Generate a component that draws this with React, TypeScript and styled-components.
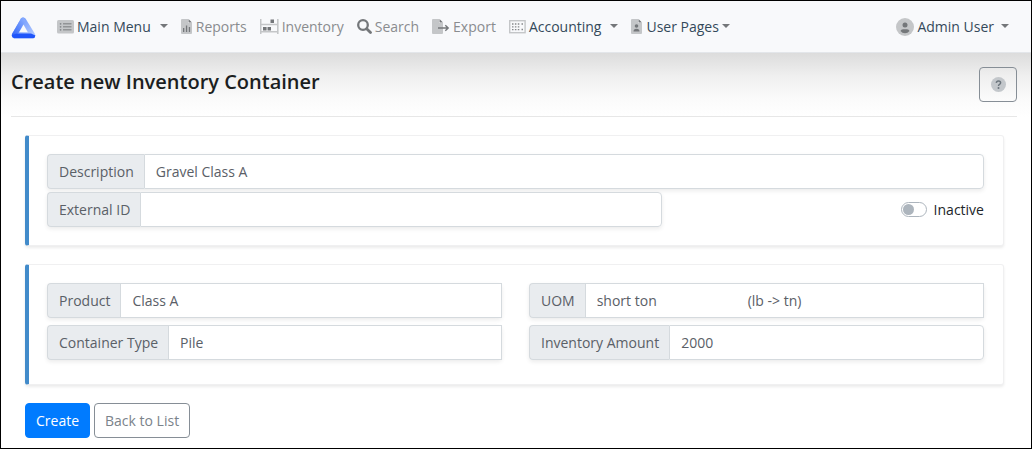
import React, { useState } from "react";
import styled, { createGlobalStyle } from "styled-components";

const GlobalStyle = createGlobalStyle`
  *, *::before, *::after { box-sizing: border-box; }
  body {
    margin: 0;
    background: #fff;
    color: #212529;
    font: 14px/21px "Open Sans", "Noto Sans", sans-serif;
  }
  button, input, select { font: inherit; }
`;

const Page = styled.div`
  min-height: 100vh;
  border: 1px solid #000;
`;

const Navbar = styled.nav`
  display: flex;
  align-items: center;
  height: 52px;
  padding: 0 22px 0 10px;
  background: #f8f9fb;
  border-bottom: 1px solid #e3e6ea;
`;

const Brand = styled.a`
  display: flex;
  margin-right: 21px;
  padding-top: 2px;
`;

const NavList = styled.ul`
  display: flex;
  flex: 1;
  gap: 13px;
  margin: 0;
  padding: 0;
  list-style: none;
`;

const NavSpacer = styled.li`
  flex: 1;
`;

const NavLink = styled.a`
  display: flex;
  align-items: center;
  gap: 3px;
  color: #8a8c8f;
  text-decoration: none;
  white-space: nowrap;
`;

const NavToggle = styled.button`
  display: flex;
  align-items: center;
  gap: 3px;
  padding: 0;
  border: 0;
  background: none;
  color: #34495a;
  white-space: nowrap;
`;

const Caret = styled.span<{ $gap: number }>`
  margin-left: ${(p) => p.$gap}px;
  margin-bottom: 2px;
  border: 4px solid transparent;
  border-top-color: #74777a;
  border-bottom: 0;
`;

const Main = styled.main`
  padding: 14px 14px 10px 10px;
  background: linear-gradient(#dcdcdc, #f0f0f0 24px, #fafafa 44px, #fff 64px);
`;

const Heading = styled.header`
  display: flex;
  align-items: flex-start;
  justify-content: space-between;
  padding-bottom: 14px;
  border-bottom: 1px solid #e7e7e7;
`;

const Title = styled.h1`
  margin: 0;
  font-size: 20px;
  line-height: 30px;
  font-weight: 600;
  color: #1b1e21;
`;

const HelpButton = styled.button`
  display: flex;
  align-items: center;
  justify-content: center;
  width: 38px;
  height: 35px;
  padding: 0;
  border: 1px solid #868e96;
  border-radius: 4px;
  background: none;
`;

const Form = styled.form`
  padding: 18px 13px 0 14px;
`;

const Card = styled.section<{ $rowGap: number; $bottom: number }>`
  display: flex;
  flex-direction: column;
  gap: ${(p) => p.$rowGap}px;
  margin-bottom: 18px;
  padding: 18px 19px ${(p) => p.$bottom}px 18px;
  border: 1px solid #f0f0f1;
  border-left: 4px solid #428bca;
  border-radius: 3px;
  background: #fff;
  box-shadow: 0 2px 3px rgba(0, 0, 0, 0.08);
`;

const Row = styled.div<{ $columns: string; $gap: number }>`
  display: grid;
  grid-template-columns: ${(p) => p.$columns};
  column-gap: ${(p) => p.$gap}px;
  align-items: center;
`;

const Group = styled.div`
  display: flex;
  height: 35px;
  min-width: 0;
  border-radius: 4px;
  box-shadow: 0 2px 4px rgba(0, 0, 0, 0.08);
`;

const Label = styled.label`
  display: flex;
  align-items: center;
  padding: 0 10px 0 11px;
  border: 1px solid #d5dade;
  border-right: 0;
  border-radius: 4px 0 0 4px;
  background: #e9ecef;
  color: #5a6067;
  white-space: nowrap;
`;

const TextInput = styled.input`
  flex: 1;
  min-width: 0;
  padding: 0 11px;
  border: 1px solid #d5dade;
  border-radius: 0 4px 4px 0;
  background: #fff;
  color: #5a6067;
`;

const Select = styled.select`
  flex: 1;
  min-width: 0;
  padding: 0 11px;
  appearance: none;
  border: 1px solid #d5dade;
  border-radius: 0;
  background: #fff;
  color: #5a6067;
`;

const SwitchLabel = styled.label`
  display: flex;
  align-items: center;
  justify-content: flex-end;
  gap: 7px;
`;

const Switch = styled.input`
  display: flex;
  align-items: center;
  appearance: none;
  width: 26px;
  height: 15px;
  margin: 0;
  padding: 0 1px;
  border: 1px solid #adb5bd;
  border-radius: 8px;
  background: #fff;
  &::before {
    content: "";
    width: 11px;
    height: 11px;
    border-radius: 50%;
    background: #adb5bd;
  }
  &:checked {
    justify-content: flex-end;
  }
`;

const Actions = styled.div`
  display: flex;
  gap: 4px;
`;

const CreateButton = styled.button`
  height: 35px;
  padding: 0 10px;
  border: 1px solid #007bff;
  border-radius: 4px;
  background: #007bff;
  color: #fff;
`;

const BackLink = styled.a`
  display: flex;
  align-items: center;
  height: 35px;
  padding: 0 10px;
  border: 1px solid #868e96;
  border-radius: 4px;
  color: #7b838a;
  text-decoration: none;
`;

const LIGHT = "#c4c6c8";
const DARK = "#74777a";

const Logo = () => (
  <svg width="25" height="22" viewBox="0 0 25 22" aria-hidden="true">
    <defs>
      <linearGradient id="logoLeft" x1="0" y1="1" x2="1" y2="0">
        <stop offset="0" stopColor="#2f62f8" />
        <stop offset="1" stopColor="#8fb2ff" />
      </linearGradient>
      <linearGradient id="logoRight" x1="0" y1="0" x2="1" y2="1">
        <stop offset="0" stopColor="#5f8dfc" />
        <stop offset="1" stopColor="#b9ceff" />
      </linearGradient>
    </defs>
    <path d="M10 1.500 Q12 -0.500 14.500 1.500 L24 17 Q25 21.200 22 21.200 H3 Q0 21 1 17 Z" fill="url(#logoRight)" />
    <path d="M10 1.500 Q11.300 0 13 0.800 L14.500 4 L7.500 16 L1.500 19.500 Q0.400 18.500 1 17 Z" fill="url(#logoLeft)" />
    <path d="M0.800 18 L6 16.500 H20 L24.400 18.500 Q24 21.200 22 21.200 H3 Q1 21 0.800 18 Z" fill="#1f55fa" />
    <path d="M12.500 7.500 L16.800 15.200 H8.200 Z" fill="#f8f9fb" />
  </svg>
);

const MenuIcon = () => (
  <svg width="17" height="14" viewBox="0 0 17 14" aria-hidden="true">
    <rect width="17" height="13.500" rx="1.500" fill={LIGHT} />
    <g fill="#85888b">
      <circle cx="3.600" cy="3.800" r="0.900" />
      <circle cx="3.600" cy="6.800" r="0.900" />
      <circle cx="3.600" cy="9.800" r="0.900" />
      <rect x="6" y="3.200" width="8.500" height="1.200" />
      <rect x="6" y="6.200" width="8.500" height="1.200" />
      <rect x="6" y="9.200" width="8.500" height="1.200" />
    </g>
  </svg>
);

const ReportIcon = () => (
  <svg width="12" height="15" viewBox="0 0 12 15" aria-hidden="true">
    <path d="M1 0 H7 V4 H11 V14 Q11 15 10 15 H1 Q0 15 0 14 V1 Q0 0 1 0 Z" fill={LIGHT} />
    <path d="M7.500 0 L11 3.500 H7.500 Z M2 9 H3.300 V13 H2 Z M4.900 6.500 H6.200 V13 H4.900 Z M7.800 8 H9.100 V13 H7.800 Z" fill={DARK} />
  </svg>
);

const InventoryIcon = () => (
  <svg width="19" height="15" viewBox="0 0 19 15" aria-hidden="true">
    <path d="M0.700 0 V15 M17.800 0 V15 M0.700 5.500 H17.800 M0.700 12.800 H17.800" fill="none" stroke={LIGHT} strokeWidth="1.600" />
    <path d="M10.500 0.500 H14 V4 H10.500 Z M3 8 H6.600 V11.500 H3 Z M7.500 8 H11 V11.500 H7.500 Z" fill={DARK} />
  </svg>
);

const SearchIcon = () => (
  <svg width="15" height="15" viewBox="0 0 15 15" aria-hidden="true">
    <circle cx="6" cy="6" r="4.800" fill="none" stroke={DARK} strokeWidth="2.300" />
    <path d="M9.700 9.700 L13.500 13.500" stroke={DARK} strokeWidth="2.800" strokeLinecap="round" />
  </svg>
);

const ExportIcon = () => (
  <svg width="18" height="15" viewBox="0 0 18 15" aria-hidden="true">
    <path d="M1 0 H7 V4 H11 V14 Q11 15 10 15 H1 Q0 15 0 14 V1 Q0 0 1 0 Z" fill={LIGHT} />
    <path d="M7.500 0 L11 3.500 H7.500 Z" fill={DARK} />
    <path d="M6 9 H16 M13.300 6.200 L16.200 9 L13.300 11.800" fill="none" stroke={DARK} strokeWidth="1.400" />
  </svg>
);

const AccountingIcon = () => (
  <svg width="17" height="14" viewBox="0 0 17 14" aria-hidden="true">
    <rect x="0.700" y="0.700" width="15.400" height="12" fill="none" stroke={LIGHT} strokeWidth="1.400" />
    <path d="M3 4 H10.500 M3 6.800 H10.500 M3 9.600 H10.500" stroke="#85888b" strokeWidth="1.300" strokeDasharray="1.500 1.400" />
    <path d="M12.500 4 H14 M12.500 9.600 H14" stroke="#85888b" strokeWidth="1.500" />
  </svg>
);

const UserPageIcon = () => (
  <svg width="12" height="15" viewBox="0 0 12 15" aria-hidden="true">
    <path d="M1 0 H7 V4 H11 V14 Q11 15 10 15 H1 Q0 15 0 14 V1 Q0 0 1 0 Z" fill={LIGHT} />
    <path d="M7.500 0 L11 3.500 H7.500 Z M2.500 12.500 Q2.500 9.700 5.500 9.700 Q8.500 9.700 8.500 12.500 Z" fill={DARK} />
    <circle cx="5.500" cy="7" r="1.800" fill={DARK} />
  </svg>
);

const UserIcon = () => (
  <svg width="18" height="18" viewBox="0 0 18 18" aria-hidden="true">
    <circle cx="9" cy="9" r="9" fill={LIGHT} />
    <circle cx="9" cy="7" r="2.500" fill={DARK} />
    <path d="M4.500 13 Q5 11.300 7 11.300 H11 Q13 11.300 13.500 13 Q11.800 15.300 9 15.300 Q6.200 15.300 4.500 13 Z" fill={DARK} />
  </svg>
);

const HelpIcon = () => (
  <svg width="15" height="15" viewBox="0 0 15 15" aria-hidden="true">
    <circle cx="7.500" cy="7.500" r="7.500" fill="#c3c7cb" />
    <path d="M5.300 5.900 Q5.500 4 7.500 4 Q9.600 4 9.600 5.800 Q9.600 6.800 8.500 7.400 Q7.500 7.900 7.500 8.900" fill="none" stroke="#6c757d" strokeWidth="1.500" />
    <circle cx="7.500" cy="11" r="1" fill="#6c757d" />
  </svg>
);

const uomText = "short ton" + "\u00a0".repeat(25) + "(lb -> tn)";

export default function App() {
  const [inactive, setInactive] = useState(false);
  return (
    <Page>
      <GlobalStyle />
      <Navbar>
        <Brand href="#" aria-label="Home"><Logo /></Brand>
        <NavList>
          <li><NavToggle><MenuIcon />Main Menu<Caret $gap={6} /></NavToggle></li>
          <li><NavLink href="#"><ReportIcon />Reports</NavLink></li>
          <li><NavLink href="#"><InventoryIcon />Inventory</NavLink></li>
          <li><NavLink href="#"><SearchIcon />Search</NavLink></li>
          <li><NavLink href="#"><ExportIcon />Export</NavLink></li>
          <li><NavToggle><AccountingIcon />Accounting<Caret $gap={6} /></NavToggle></li>
          <li><NavToggle><UserPageIcon />User Pages<Caret $gap={0} /></NavToggle></li>
          <NavSpacer />
          <li><NavToggle><UserIcon />Admin User<Caret $gap={4} /></NavToggle></li>
        </NavList>
      </Navbar>
      <Main>
        <Heading>
          <Title>Create new Inventory Container</Title>
          <HelpButton type="button" aria-label="Help"><HelpIcon /></HelpButton>
        </Heading>
        <Form onSubmit={(e) => e.preventDefault()}>
          <Card $rowGap={3} $bottom={18}>
            <Group>
              <Label htmlFor="description">Description</Label>
              <TextInput id="description" defaultValue="Gravel Class A" />
            </Group>
            <Row $columns="2fr 1fr" $gap={14}>
              <Group>
                <Label htmlFor="externalId">External ID</Label>
                <TextInput id="externalId" />
              </Group>
              <SwitchLabel>
                <Switch type="checkbox" checked={inactive} onChange={(e) => setInactive(e.target.checked)} />
                Inactive
              </SwitchLabel>
            </Row>
          </Card>
          <Card $rowGap={7} $bottom={24}>
            <Row $columns="1fr 1fr" $gap={27}>
              <Group>
                <Label htmlFor="product">Product</Label>
                <Select id="product"><option>Class A</option></Select>
              </Group>
              <Group>
                <Label htmlFor="uom">UOM</Label>
                <Select id="uom"><option>{uomText}</option></Select>
              </Group>
            </Row>
            <Row $columns="1fr 1fr" $gap={27}>
              <Group>
                <Label htmlFor="containerType">Container Type</Label>
                <Select id="containerType"><option>Pile</option></Select>
              </Group>
              <Group>
                <Label htmlFor="amount">Inventory Amount</Label>
                <TextInput id="amount" defaultValue="2000" />
              </Group>
            </Row>
          </Card>
          <Actions>
            <CreateButton type="submit">Create</CreateButton>
            <BackLink href="#">Back to List</BackLink>
          </Actions>
        </Form>
      </Main>
    </Page>
  );
}
